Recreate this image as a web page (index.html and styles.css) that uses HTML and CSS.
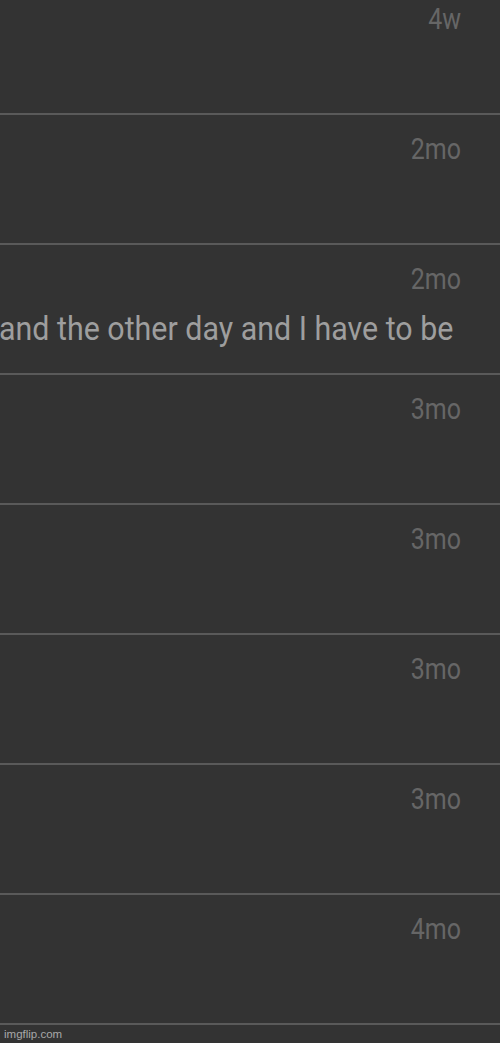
FILE: index.html
```html
<!DOCTYPE html>
<html>
<head>
<meta charset="utf-8">
<link rel="stylesheet" href="styles.css">
</head>
<body>
<div class="list">
  <div class="row"><div class="time">4w</div></div>
  <div class="row"><div class="time">2mo</div></div>
  <div class="row"><div class="time">2mo</div><div class="preview">and the other day and I have to be</div></div>
  <div class="row"><div class="time">3mo</div></div>
  <div class="row"><div class="time">3mo</div></div>
  <div class="row"><div class="time">3mo</div></div>
  <div class="row"><div class="time">3mo</div></div>
  <div class="row"><div class="time">4mo</div></div>
  <div class="row"></div>
</div>
<div class="watermark">imgflip.com</div>
</body>
</html>
```

FILE: styles.css
```css
html, body {
  margin: 0;
  padding: 0;
  background: #333333;
  overflow: hidden;
  height: 1043px;
}
body {
  font-family: Roboto, "Liberation Sans", sans-serif;
  position: relative;
}
.list {
  margin-top: -15px;
  display: flex;
  flex-direction: column;
}
.row {
  height: 108px;
  padding-top: 20px;
  border-bottom: 2px solid #5a5a5a;
  display: flex;
  flex-direction: column;
}
.time {
  align-self: flex-end;
  margin-right: 39px;
  font-size: 25px;
  line-height: 30px;
  color: #666666;
  transform: scaleY(1.16);
}
.preview {
  margin-top: 17px;
  margin-left: -1px;
  font-size: 30.4px;
  line-height: 34px;
  color: #9e9e9e;
  white-space: nowrap;
  transform: scaleY(1.1);
  transform-origin: left center;
}
.watermark {
  position: absolute;
  left: 4px;
  bottom: 3px;
  font-family: "Liberation Sans", Arial, sans-serif;
  font-size: 11.5px;
  color: #a8a8a8;
}
```
